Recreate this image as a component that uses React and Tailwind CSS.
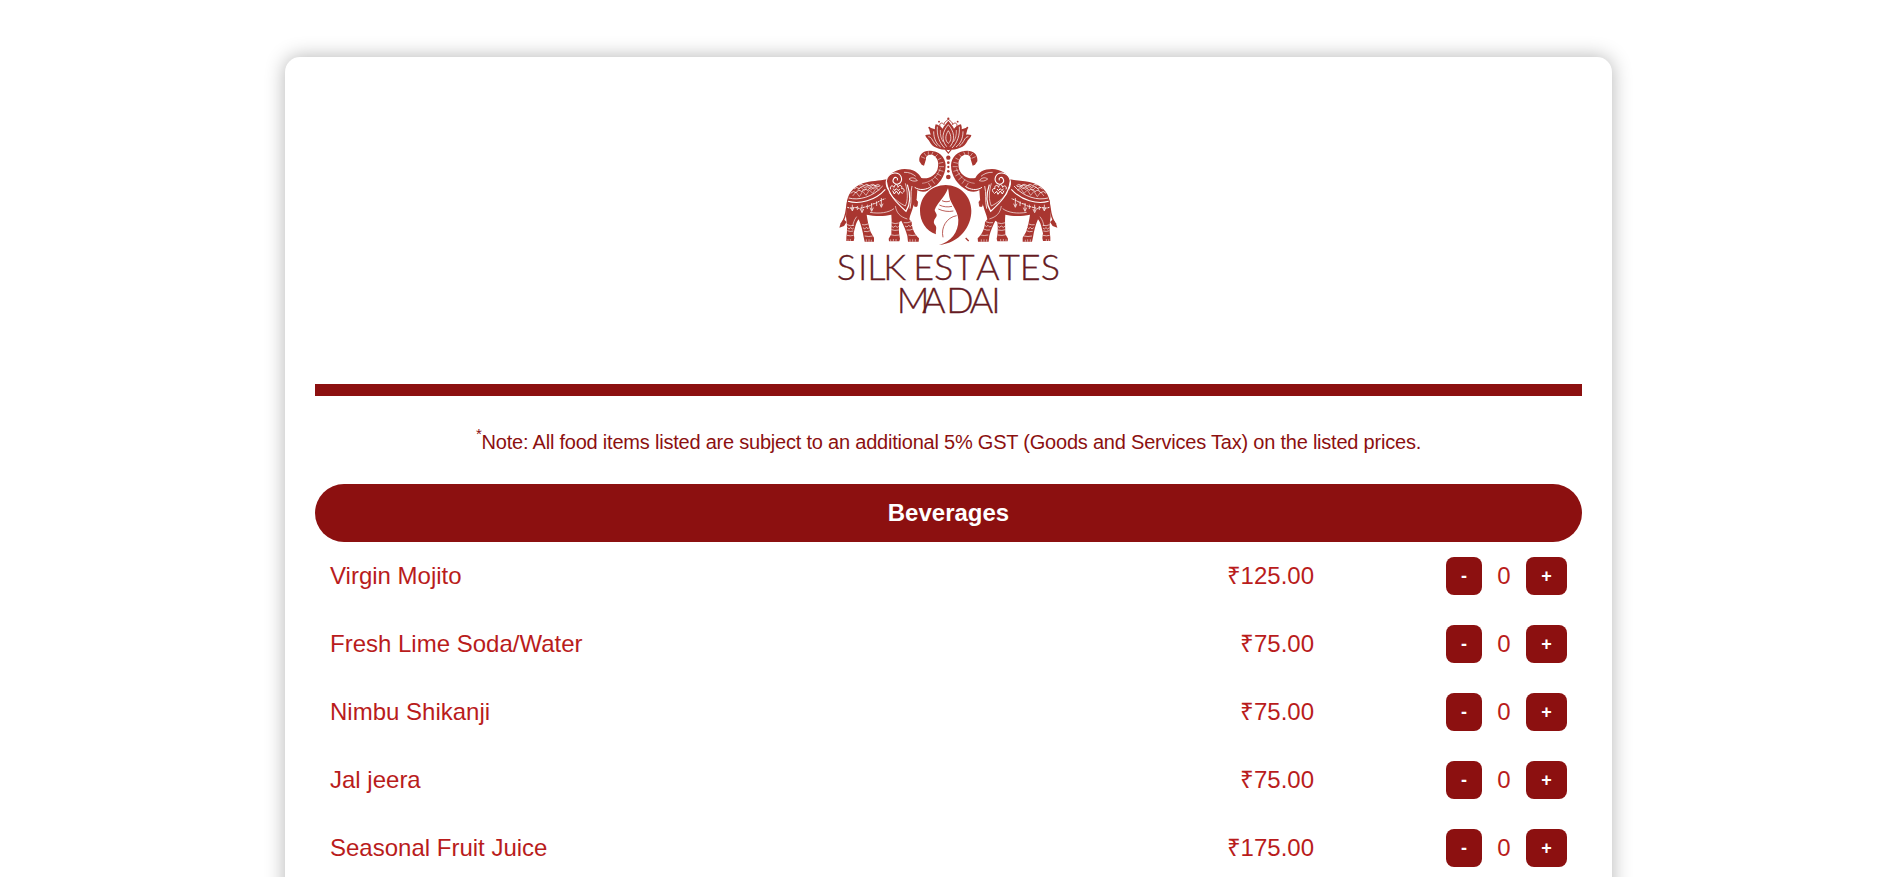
const ITEMS = [
  ["Virgin Mojito", "125.00"],
  ["Fresh Lime Soda/Water", "75.00"],
  ["Nimbu Shikanji", "75.00"],
  ["Jal jeera", "75.00"],
  ["Seasonal Fruit Juice", "175.00"],
];

function Elephant() {
  return (
    <g>
      {/* tail */}
      <path d="M84 300C78 325 80 350 66 368" fill="none" stroke="#a93630" strokeWidth="4" />
      <path d="M71 358L80 366L72 378L58 383L62 370Z" fill="#a93630" />
      {/* body, head, legs */}
      <path
        fill="#a93630"
        d="M80 312C82 285 96 262 128 250C152 242 178 243 200 238C206 222 228 208 254 207C278 207 296 217 304 234C326 238 344 228 352 210C358 190 354 172 338 165C326 162 316 168 318 178L312 197L305 194L298 184C296 164 308 153 328 152C356 152 376 170 377 196C377 228 356 258 326 272C312 277 300 276 292 270L290 296L280 318C276 334 270 344 268 358L275 366C276 388 284 402 297 415L296 425L264 425L262 408C258 392 252 378 244 362L238 366C236 380 236 400 240 416L238 424L207 424L206 416L214 402C214 384 216 366 214 344C190 350 160 348 140 344C142 360 146 378 152 396L162 413L162 425L134 425L131 412C128 394 124 376 116 358C108 366 104 388 101 400L103 414L101 423L79 423L79 412C82 392 82 374 78 350Z"
      />
      {/* trunk bands */}
      <g stroke="#fff" strokeWidth="2.4" fill="none">
        <path d="M303 170l12 5M312 159l7 9M325 154v10M339 155l-4 10M353 163l-8 8M364 174l-10 5M370 187l-14 3M372 200l-15 0M370 214l-15-4M364 228l-14-8M355 240l-12-10M344 251l-9-12M332 260l-7-11" strokeWidth="1.5" />
        <path d="M306 250C330 248 352 232 361 205" strokeWidth="1.3" />
        {/* eye and cheek */}
        <path d="M267 237C276 230 286 234 292 242C282 245 274 243 267 237M252 217C267 216 279 222 287 229" strokeWidth="2" />
        <path d="M284 262C298 272 320 270 334 259" strokeWidth="3" />
        {/* ear */}
        <path d="M204 268C192 244 202 221 224 219C243 218 250 238 240 249C229 258 214 247 221 236C226 229 235 233 232 241" strokeWidth="3.2" />
        <path d="M212 268c-4-10 6-14 10-6c2-12 12-10 12 0c4-10 14-6 11 4c9-2 10 8 3 12M218 272l5 10l6-9l7 10l4-9l7 7M220 266l4 6l5-6l6 6l4-5" strokeWidth="3" />
        {/* harness */}
        <path d="M199 244C205 286 232 310 258 334C272 312 273 286 262 254" strokeWidth="3.6" />
        <path d="M208 278C222 298 242 311 256 318C264 300 264 278 256 250" strokeWidth="2" />
        <path d="M276 258C270 280 276 300 270 326" strokeWidth="2.4" />
      </g>
      {/* saddle cloth */}
      <g stroke="#fff" strokeWidth="2.2" fill="none">
        <path d="M84 304C118 314 166 302 196 268" strokeWidth="3.2" />
        <path d="M86 294C116 302 158 292 188 258" strokeWidth="2.4" />
        <path d="M82 322C94 328 108 318 118 326C130 320 146 322 158 312C168 312 180 300 196 296" strokeWidth="3" strokeDasharray="6 2" />
        <path d="M92 280q8-10 16-2q8-12 17-3q8-12 18-4q8-13 18-5q9-12 18-6M102 267q8-9 16-1q8-11 17-3q9-11 17-3q9-10 17-2M118 256q8-6 14 1q9-8 16 0q10-8 17 0q9-7 16 0" />
        <path d="M98 288l10-12l10 14l10-16l10 12l10-16l10 10l10-15l10 6M112 271l10-10l11 11l10-12l11 9l10-11l10 7" strokeWidth="1.6" />
        <path d="M97 314v16m-4-6l4 9l4-9M112 318v12m14-16v20m-5-7l5 11l5-11M142 314v13m13-18v22m-5-8l5 11l5-11M170 304v14m14-24v25m-5-8l5 11l5-11" strokeWidth="2.2" />
        <path d="M150 337C178 342 206 338 222 326" strokeWidth="2" />
        <path d="M226 318C230 340 240 350 262 357M110 350C102 360 100 370 98 378" strokeWidth="1.8" />
      </g>
      {/* anklets */}
      <g stroke="#fff" strokeWidth="1.9" fill="none">
        <path d="M81 374q10 5 21 2M82 383l5 4l5-4l5 4l4-3M82 392q9 4 18 1M81 406q10 3 20 0M126 374q8 2 18-2M129 383l5 4l5-5l5 4l4-4M132 394q10 3 19-2M134 408q12 3 24 0M214 368q12 5 22 1M214 378l6 4l6-4l6 4l4-3M214 389q10 4 22 1M211 404q13 4 26 1M251 368q10 2 22-3M255 378l6 3l5-5l5 4l5-5M260 390q10 2 19-3M265 405q12 3 24 0" />
        <path d="M84 418v6m7-7v7M139 418v7m8-7v7m7-6v6M212 418v6m8-7v7m8-7v7M270 418v7m8-7v7m8-7v7" strokeWidth="1.6" />
      </g>
      {/* tassel */}
      <path d="M287 286v18M282 306l5-8l6 8l-2 13h-7z" fill="#a93630" stroke="#a93630" strokeWidth="2.5" />
    </g>
  );
}

function Lotus() {
  return (
    <g>
      <path
        fill="#a93630"
        d="M385 62C392 72 399 78 402 86C408 78 415 75 423 73C425 79 426 84 425 88L444 82C442 90 440 96 438 104C444 103 449 104 454 105C453 114 444 118 442 124C434 142 412 150 385 150C358 150 336 142 328 124C326 118 317 114 316 105C321 104 326 103 332 104C330 96 328 90 326 82L345 88C344 84 345 79 347 73C355 75 362 78 368 86C371 78 378 72 385 62Z"
      />
      <g fill="none" stroke="#fff" strokeWidth="2.2">
        <path d="M385 74C368 94 362 118 380 140M385 74C402 94 408 118 390 140" />
        <path d="M385 92C374 108 376 124 385 130C394 124 396 108 385 92Z" strokeWidth="2.2" />
        <path d="M352 80C350 106 358 128 374 144M418 80C420 106 412 128 396 144" />
        <path d="M361 90C360 106 364 118 370 126M409 90C410 106 406 118 400 126" strokeWidth="1.8" />
        <path d="M325 110C337 110 337 128 352 138M445 110C433 110 433 128 418 138M341 94C341 118 350 132 362 141M429 94C429 118 420 132 408 141" />
      </g>
      <g fill="none" stroke="#a93630" strokeWidth="2.6">
        <path d="M360 80C356 68 368 66 372 74C372 66 378 64 385 58C392 64 398 66 398 74C402 66 414 68 410 80" />
        <path d="M376 148l9 11l9-11" strokeWidth="3.5" />
      </g>
      <g fill="#a93630">
        <circle cx="385" cy="56" r="3.4" />
        <circle cx="357" cy="65" r="2.8" />
        <circle cx="413" cy="65" r="2.8" />
        <circle cx="328" cy="83" r="2.8" />
        <circle cx="442" cy="83" r="2.8" />
        <circle cx="385" cy="173" r="6.5" />
        <circle cx="385" cy="188" r="4" />
        <circle cx="385" cy="201" r="3.4" />
        <circle cx="385" cy="214" r="4" />
        <circle cx="385" cy="231" r="7" />
      </g>
    </g>
  );
}

function Logo() {
  return (
    <svg className="h-[230px] w-[260px]" viewBox="0 0 780 690" role="img" aria-label="Silk Estates Madai">
      <Lotus />
      <Elephant />
      <g transform="translate(770 0) scale(-1 1)">
        <Elephant />
      </g>
      <circle cx="377" cy="332" r="81" fill="#fff" />
      <path
        fill="#a93630"
        d="M384 265C374 292 352 308 344 330C346 340 354 342 348 352C340 362 340 370 346 376C352 384 346 392 348 403C318 392 300 364 300 332C300 289 334 255 377 255C420 255 454 289 454 332C454 380 420 428 357 435C392 426 416 396 415 360C414 330 392 312 388 290C386 280 386 272 384 265Z"
      />
      <g fill="none" stroke="#a93630" strokeWidth="2.4">
        <path d="M369 412C362 382 380 352 410 347" />
        <path d="M366 302C374 306 382 306 390 303M358 315C370 321 384 322 396 319M355 327C370 334 386 336 400 333" />
        <path d="M437 414l9 9" strokeWidth="4" />
      </g>
      <g fontFamily="Lato, sans-serif" fontWeight="300" fontSize="108" fill="#651a22" stroke="#651a22" strokeWidth="1">
        <text y="539" x="50 114 142 190 240 280 342 401 468 537 599 662">SILK ESTATES</text>
        <text y="639" x="230 306 379 449 514">MADAI</text>
      </g>
    </svg>
  );
}

function Row({ name, price }) {
  return (
    <div className="flex h-[68px] items-center px-[15px] text-2xl text-[#b91c1c]">
      <span className="grow">{name}</span>
      <span className="w-[200px] text-right">₹{price}</span>
      <div className="ml-[132px] flex items-center">
        <button className="h-[38px] w-9 rounded-lg bg-[#8c1010] text-lg font-bold text-white">-</button>
        <span className="w-11 text-center">0</span>
        <button className="h-[38px] w-[41px] rounded-lg bg-[#8c1010] text-lg font-bold text-white">+</button>
      </div>
    </div>
  );
}

export default function App() {
  return (
    <div className="h-[877px] overflow-hidden bg-white pt-[57px] font-['Liberation_Sans',Arial,sans-serif]">
      <main className="ml-[285px] h-[1200px] w-[1327px] rounded-[15px] bg-white px-[30px] shadow-[0_0_20px_rgba(0,0,0,0.3)]">
        <header className="flex h-[327px] justify-center pt-[43px] pl-[3px]">
          <Logo />
        </header>
        <div className="h-3 bg-[#8c1010]" />
        <p className="flex h-[88px] items-center justify-center pt-[3px] text-xl tracking-[-0.215px] text-[#8c1010]">
          <span className="whitespace-nowrap">
            <sup className="top-[-10px] text-[15px]">*</sup>Note: All food items listed are subject to an additional 5% GST (Goods and Services Tax) on the listed prices.
          </span>
        </p>
        <h2 className="flex h-[58px] items-center justify-center rounded-[30px] bg-[#8c1010] text-2xl font-bold text-white">
          Beverages
        </h2>
        <section>
          {ITEMS.map(([name, price]) => (
            <Row key={name} name={name} price={price} />
          ))}
        </section>
      </main>
    </div>
  );
}
